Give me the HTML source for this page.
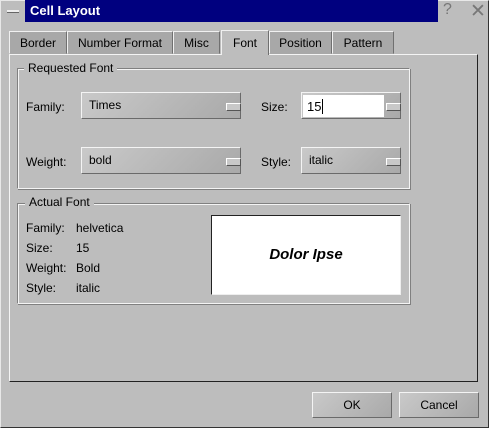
<!DOCTYPE html>
<html><head><style>
*{box-sizing:border-box;margin:0;padding:0}
body{width:489px;height:428px;overflow:hidden;background:#bdbdbd;font-family:"Liberation Sans","DejaVu Sans",sans-serif;font-size:12px;color:#000;position:relative}
.a{position:absolute}
.raised{border:1px solid;border-color:#f4f4f4 #6a6a6a #6a6a6a #f4f4f4;background:linear-gradient(135deg,#c9c9c9,#a9a9a9)}
.tab{position:absolute;top:31px;height:23px;border:1px solid;border-color:#f0f0f0 #707070 transparent #f0f0f0;background:#a8a8a8;text-align:center;line-height:22px;font-size:12px}
.grp{position:absolute;border:1px solid;border-color:#808080 #f4f4f4 #f4f4f4 #808080;box-shadow:inset 1px 1px 0 #f4f4f4,1px 1px 0 #808080}
.gt{position:absolute;background:#bdbdbd;padding:0 4px;font-size:12px;line-height:14px}
.btnk{position:absolute;width:15px;height:8px;border:1px solid;border-color:#fff #555 #555 #fff;background:#c8c8c8}
</style></head><body>
<div class="a" style="left:0;top:0;width:489px;height:428px;border:1px solid;border-color:#e8e8e8 #333 #333 #e8e8e8"></div>
<div class="a" style="left:7px;top:10px;width:12px;height:3px;background:#eee;border-bottom:1px solid #666"></div>
<div class="a" style="left:25px;top:0;width:413px;height:22px;background:#00007f;color:#fff;font-weight:bold;font-size:13px;line-height:22px;padding-left:5px">Cell Layout</div>
<div class="a" style="left:443px;top:1px;color:#777;font-size:16px">?</div>
<div class="a" style="left:470px;top:0;color:#777;font-size:19px">✕</div>

<div class="a" style="left:9px;top:54px;width:469px;height:328px;border:1px solid;border-color:#f4f4f4 #222 #222 #f4f4f4"></div>
<div class="tab" style="left:9px;width:58px">Border</div>
<div class="tab" style="left:67px;width:106px">Number Format</div>
<div class="tab" style="left:173px;width:47px">Misc</div>
<div class="tab" style="left:221px;top:30px;height:25px;width:48px;background:#bdbdbd;border-bottom:none;line-height:25px">Font</div>
<div class="tab" style="left:269px;width:63px">Position</div>
<div class="tab" style="left:332px;width:62px">Pattern</div>

<div class="grp" style="left:17px;top:68px;width:393px;height:121px"></div>
<div class="gt" style="left:24px;top:61px">Requested Font</div>
<div class="a" style="left:26px;top:100px">Family:</div>
<div class="a raised" style="left:81px;top:92px;width:160px;height:27px"><span class="a" style="left:7px;top:5px">Times</span><div class="btnk" style="left:144px;top:10px"></div></div>
<div class="a" style="left:261px;top:100px">Size:</div>
<div class="a raised" style="left:301px;top:92px;width:100px;height:27px"><div class="a" style="left:1px;top:2px;width:81px;height:22px;background:#fff;font-size:13px;padding:4px 0 0 4px">15<span style="border-left:1px solid #000;margin-left:1px"></span></div><div class="btnk" style="left:84px;top:10px"></div></div>
<div class="a" style="left:26px;top:155px">Weight:</div>
<div class="a raised" style="left:81px;top:147px;width:160px;height:27px"><span class="a" style="left:7px;top:5px">bold</span><div class="btnk" style="left:144px;top:10px"></div></div>
<div class="a" style="left:261px;top:155px">Style:</div>
<div class="a raised" style="left:301px;top:147px;width:100px;height:27px"><span class="a" style="left:7px;top:5px">italic</span><div class="btnk" style="left:84px;top:10px"></div></div>

<div class="grp" style="left:17px;top:203px;width:393px;height:101px"></div>
<div class="gt" style="left:25px;top:195px">Actual Font</div>
<div class="a" style="left:26px;top:218px;line-height:20px">Family:<br>Size:<br>Weight:<br>Style:</div>
<div class="a" style="left:76px;top:218px;line-height:20px">helvetica<br>15<br>Bold<br>italic</div>
<div class="a" style="left:211px;top:215px;width:190px;height:80px;background:#fff;border:1px solid;border-color:#222 #eee #eee #222;text-align:center;line-height:78px;font-style:italic;font-weight:bold;font-size:15px">Dolor Ipse</div>

<div class="a raised" style="left:312px;top:392px;width:80px;height:26px;text-align:center;line-height:24px">OK</div>
<div class="a raised" style="left:399px;top:392px;width:80px;height:26px;text-align:center;line-height:24px">Cancel</div>
</body></html>
